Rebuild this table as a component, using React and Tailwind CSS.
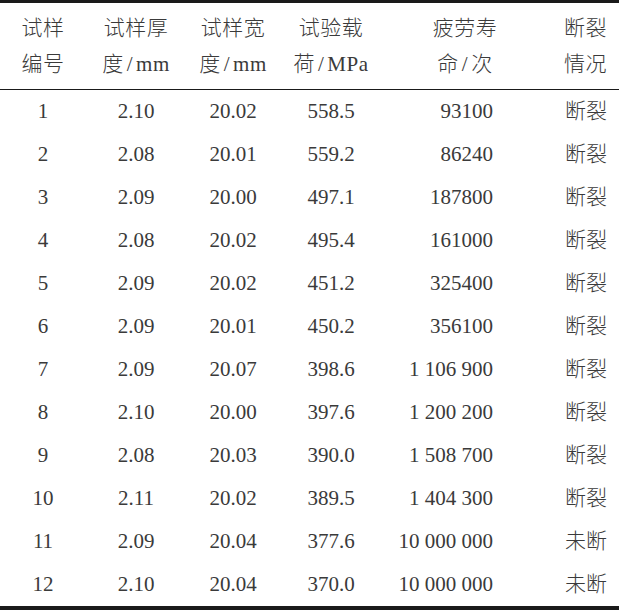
const HEADERS = [
  ['试样', '编号'],
  ['试样厚', '度', 'mm'],
  ['试样宽', '度', 'mm'],
  ['试验载', '荷', 'MPa'],
  ['疲劳寿', '命', '次'],
  ['断裂', '情况'],
];

const ROWS = [
  ['1', '2.10', '20.02', '558.5', '93100', '断裂'],
  ['2', '2.08', '20.01', '559.2', '86240', '断裂'],
  ['3', '2.09', '20.00', '497.1', '187800', '断裂'],
  ['4', '2.08', '20.02', '495.4', '161000', '断裂'],
  ['5', '2.09', '20.02', '451.2', '325400', '断裂'],
  ['6', '2.09', '20.01', '450.2', '356100', '断裂'],
  ['7', '2.09', '20.07', '398.6', '1 106 900', '断裂'],
  ['8', '2.10', '20.00', '397.6', '1 200 200', '断裂'],
  ['9', '2.08', '20.03', '390.0', '1 508 700', '断裂'],
  ['10', '2.11', '20.02', '389.5', '1 404 300', '断裂'],
  ['11', '2.09', '20.04', '377.6', '10 000 000', '未断'],
  ['12', '2.10', '20.04', '370.0', '10 000 000', '未断'],
];

// column widths: 86 100 94 102 166 71
const GRID = 'grid grid-cols-[86px_100px_94px_102px_166px_71px]';

const headCell = (i) =>
  i === 5 ? 'text-right pr-[12px]' : 'text-center';

const bodyCell = (i) => {
  if (i === 4) return 'text-right pr-[55px]';
  if (i === 5) return 'text-right pr-[12px]';
  return 'text-center';
};

export default function App() {
  return (
    <div
      className="w-[619px] h-[610px] bg-white text-[#3a3a3a] text-[21px] font-light"
      style={{ fontFamily: '"Liberation Serif", "Noto Sans CJK SC", serif' }}
    >
      <div className="border-t-[3px] border-b-[4px] border-[#1a1a1a]">
        {/* header */}
        <div className={`${GRID} py-[7px] border-b border-[#1a1a1a] leading-[36px] tracking-[0.5px]`}>
          {HEADERS.map(([a, b, unit], i) => (
            <div key={i} className={headCell(i)}>
              <div>{a}</div>
              <div>
                {b}
                {unit && (
                  <>
                    <span className="mx-[3px]">/</span>
                    {unit}
                  </>
                )}
              </div>
            </div>
          ))}
        </div>

        {/* body */}
        {ROWS.map((row) => (
          <div key={row[0]} className={`${GRID} h-[43px] items-center leading-[43px]`}>
            {row.map((v, i) => (
              <div key={i} className={bodyCell(i)}>
                {v}
              </div>
            ))}
          </div>
        ))}
      </div>
    </div>
  );
}
